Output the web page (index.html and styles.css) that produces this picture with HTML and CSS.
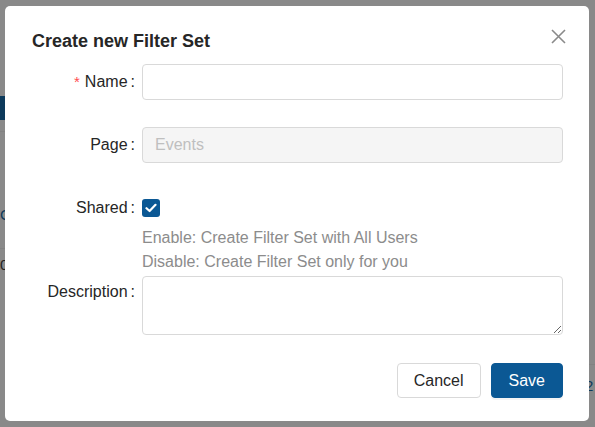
FILE: index.html
```html
<!DOCTYPE html>
<html>
<head>
<meta charset="utf-8">
<link rel="stylesheet" href="styles.css">
</head>
<body>
<div class="underlay">
  <div class="under-left">
    <div class="under-bar"></div>
    <div class="under-line l1"></div>
    <div class="under-g">G</div>
    <div class="under-line l2"></div>
    <div class="under-zero">0</div>
  </div>
  <div class="under-right">
    <div class="under-line r1"></div>
    <div class="under-two">2</div>
  </div>
</div>

<div class="modal">
  <button class="close" aria-label="Close">
    <svg width="15" height="15" viewBox="0 0 15 15"><path d="M1 1 L14 14 M14 1 L1 14" stroke="#8a8a8a" stroke-width="1.6" fill="none"/></svg>
  </button>
  <div class="title">Create new Filter Set</div>
  <form class="form">
    <div class="row">
      <label class="label"><span class="req">*</span>Name<span class="colon">:</span></label>
      <input class="input" type="text">
    </div>
    <div class="row">
      <label class="label">Page<span class="colon">:</span></label>
      <input class="input disabled" type="text" value="Events" disabled>
    </div>
    <div class="row shared-row">
      <label class="label">Shared<span class="colon">:</span></label>
      <div class="control">
        <span class="checkbox"><svg width="12" height="10" viewBox="0 0 12 10"><path d="M1.5 5.2 L4.6 8 L10.5 1.8" stroke="#fff" stroke-width="2.2" fill="none" stroke-linecap="round" stroke-linejoin="round"/></svg></span>
      </div>
    </div>
    <div class="help">
      <div>Enable: Create Filter Set with All Users</div>
      <div>Disable: Create Filter Set only for you</div>
    </div>
    <div class="row desc-row">
      <label class="label">Description<span class="colon">:</span></label>
      <textarea class="textarea"></textarea>
    </div>
  </form>
  <div class="footer">
    <button class="btn">Cancel</button>
    <button class="btn primary">Save</button>
  </div>
</div>
</body>
</html>
```

FILE: styles.css
```css
html, body {
  margin: 0;
  padding: 0;
  height: 100%;
}
body {
  background: #898989;
  font-family: "Liberation Sans", Arial, sans-serif;
  overflow: hidden;
}
.underlay {
  display: flex;
  justify-content: space-between;
  height: 427px;
}
.under-left {
  width: 20px;
  display: flex;
  flex-direction: column;
}
.under-bar {
  margin-top: 96px;
  height: 24px;
  background: #0d3a5b;
}
.under-line {
  height: 1px;
  background: #828282;
}
.l1 { margin-top: 11px; }
.under-g {
  margin-top: 74px;
  color: #0d3a5b;
  font-size: 15px;
  line-height: 18px;
}
.l2 { margin-top: 24px; }
.under-zero {
  margin-top: 7px;
  color: #222;
  font-size: 15px;
  line-height: 18px;
}
.under-right {
  width: 10px;
  display: flex;
  flex-direction: column;
}
.r1 { margin-top: 364px; }
.under-two {
  margin-top: 12px;
  color: #0d3a5b;
  font-size: 15px;
  line-height: 18px;
}

.modal {
  position: fixed;
  left: 5px;
  top: 6px;
  width: 584px;
  box-sizing: border-box;
  background: #fff;
  border-radius: 5px;
  padding: 24px 26px 23px 27px;
  color: #262626;
}
.close {
  position: absolute;
  right: 23px;
  top: 23px;
  width: 15px;
  height: 15px;
  padding: 0;
  border: 0;
  background: transparent;
  display: flex;
}
.title {
  font-size: 18px;
  font-weight: 700;
  line-height: 22px;
  color: #262626;
}
.form {
  margin: 12px 0 0 0;
  display: flex;
  flex-direction: column;
}
.row {
  display: grid;
  grid-template-columns: 110px 1fr;
  align-items: center;
  margin-bottom: 27px;
}
.label {
  font-size: 16px;
  text-align: right;
  color: #262626;
  line-height: 36px;
  white-space: nowrap;
}
.req {
  color: #ff4d4f;
  margin-right: 5px;
  font-size: 15px;
}
.colon {
  margin: 0 7px 0 3px;
}
.input {
  height: 36px;
  box-sizing: border-box;
  border: 1px solid #d9d9d9;
  border-radius: 4px;
  padding: 0 12px;
  font-family: inherit;
  font-size: 16px;
  background: #fff;
  outline: none;
}
.input.disabled {
  background: #f5f5f5;
  color: #bfbfbf;
}
.shared-row {
  margin-bottom: 0;
}
.control {
  display: flex;
  align-items: center;
  height: 36px;
}
.checkbox {
  width: 18px;
  height: 18px;
  border-radius: 3px;
  background: #0b5894;
  display: flex;
  align-items: center;
  justify-content: center;
}
.help {
  margin-left: 110px;
  font-size: 16px;
  line-height: 24px;
  color: #8c8c8c;
  margin-bottom: 2px;
}
.desc-row {
  align-items: start;
  margin-bottom: 0;
}
.desc-row .label {
  line-height: 32px;
}
.textarea {
  height: 59px;
  box-sizing: border-box;
  border: 1px solid #d9d9d9;
  border-radius: 4px;
  padding: 6px 12px;
  font-family: inherit;
  font-size: 16px;
  outline: none;
  resize: vertical;
  display: block;
}
.footer {
  margin-top: 28px;
  display: flex;
  justify-content: flex-end;
  gap: 10px;
}
.btn {
  height: 35px;
  box-sizing: border-box;
  padding: 0 16px;
  border: 1px solid #d9d9d9;
  border-radius: 4px;
  background: #fff;
  color: #262626;
  font-family: inherit;
  font-size: 16px;
  line-height: 33px;
}
.btn.primary {
  padding: 0 17px;
  background: #0b5894;
  border-color: #0b5894;
  color: #fff;
  box-shadow: 0 2px 0 rgba(0, 0, 0, 0.045);
}
```
